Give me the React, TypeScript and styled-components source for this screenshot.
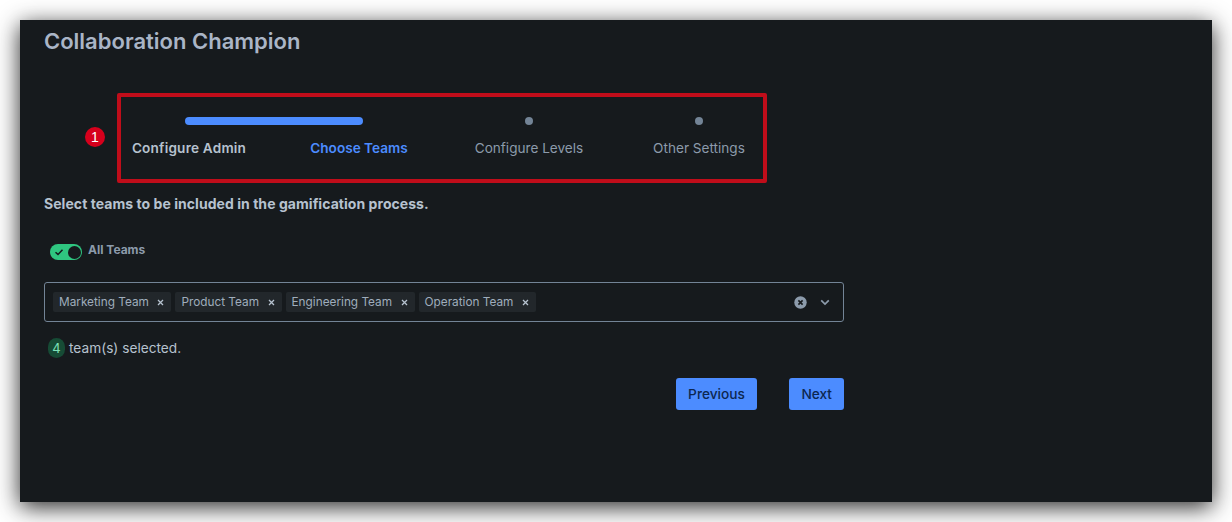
import styled, { createGlobalStyle } from 'styled-components';

const teams = ['Marketing Team', 'Product Team', 'Engineering Team', 'Operation Team'];
const steps = [
    { label: 'Configure Admin', state: 'done' },
    { label: 'Choose Teams', state: 'active' },
    { label: 'Configure Levels', state: 'todo' },
    { label: 'Other Settings', state: 'todo' },
];

export default function App() {
    return (
        <Page>
            <GlobalStyle />
            <Panel>
                <Title>Collaboration Champion</Title>
                <StepperRow>
                    <Marker>1</Marker>
                    <Highlight>
                        <Steps>
                            <ProgressBar />
                            <Dot />
                            <Dot />
                            {steps.map((step) => (
                                <StepLabel key={step.label} $state={step.state}>{step.label}</StepLabel>
                            ))}
                        </Steps>
                    </Highlight>
                </StepperRow>
                <Intro>Select teams to be included in the gamification process.</Intro>
                <ToggleRow>
                    <Toggle>
                        <svg width="10" height="10" viewBox="0 0 10 10" fill="none">
                            <path d="M1.5 5.2 L4 7.4 L8.5 2.8" stroke="#161a1d" strokeWidth="1.5" />
                        </svg>
                        <Knob />
                    </Toggle>
                    <ToggleLabel>All Teams</ToggleLabel>
                </ToggleRow>
                <MultiSelect>
                    <Tags>
                        {teams.map((team) => (
                            <Tag key={team}>
                                <TagText>{team}</TagText>
                                <svg width="7" height="7" viewBox="0 0 7 7" fill="none">
                                    <path d="M1 1 L6 6 M6 1 L1 6" stroke="#b6c2cf" strokeWidth="1.3" />
                                </svg>
                            </Tag>
                        ))}
                    </Tags>
                    <SelectIcons>
                        <svg width="13" height="13" viewBox="0 0 13 13">
                            <circle cx="6.5" cy="6.5" r="6.2" fill="#8c9bab" />
                            <path d="M4.4 4.4 L8.6 8.6 M8.6 4.4 L4.4 8.6" stroke="#161a1d" strokeWidth="1.6" />
                        </svg>
                        <svg width="10" height="7" viewBox="0 0 10 7" fill="none">
                            <path d="M1.2 1.4 L5 5 L8.8 1.4" stroke="#8c9bab" strokeWidth="1.7" />
                        </svg>
                    </SelectIcons>
                </MultiSelect>
                <Summary>
                    <Count>4</Count>
                    team(s) selected.
                </Summary>
                <Actions>
                    <Button>Previous</Button>
                    <Button>Next</Button>
                </Actions>
            </Panel>
        </Page>
    );
}

const GlobalStyle = createGlobalStyle`
    html, body {
        margin: 0;
        background: #fff;
    }
    * {
        box-sizing: border-box;
    }
`;

const Page = styled.div`
    width: 1232px;
    height: 522px;
    padding: 20px;
    overflow: hidden;
    font-family: Inter, "Liberation Sans", sans-serif;
`;

const Panel = styled.main`
    width: 1192px;
    height: 482px;
    padding: 3px 24px 0;
    background: #161a1d;
    box-shadow: 0 5px 22px rgba(0, 0, 0, 0.85);
    display: flex;
    flex-direction: column;
`;

const Title = styled.h1`
    margin: 0;
    font-size: 22px;
    line-height: 36px;
    font-weight: 600;
    color: #aab5c6;
`;

const StepperRow = styled.div`
    margin: 34px 0 0 41px;
    display: flex;
    align-items: center;
    gap: 12px;
`;

const Marker = styled.span`
    width: 20px;
    height: 20px;
    margin-bottom: 3px;
    border-radius: 50%;
    background: #d6001c;
    color: #fff;
    font-family: "Liberation Sans", sans-serif;
    font-size: 14px;
    display: flex;
    align-items: center;
    justify-content: center;
`;

const Highlight = styled.div`
    width: 650px;
    height: 90px;
    padding-top: 20px;
    border: 4px solid #c00d1a;
    border-radius: 2px;
`;

const Steps = styled.div`
    width: 680px;
    margin-left: -17px;
    display: grid;
    grid-template-columns: repeat(4, 170px);
    grid-template-rows: 8px auto;
    row-gap: 13px;
    align-items: center;
    justify-items: center;
`;

const ProgressBar = styled.div`
    grid-column: 1 / span 2;
    justify-self: stretch;
    height: 8px;
    margin: 0 81px;
    border-radius: 4px;
    background: #4c8cff;
`;

const Dot = styled.div`
    width: 8px;
    height: 8px;
    border-radius: 50%;
    background: #738496;
`;

const StepLabel = styled.div<{ $state: string }>`
    font-size: 13.6px;
    line-height: 20px;
    letter-spacing: ${(props) => (props.$state === 'done' ? '0.2px' : '0')};
    font-weight: ${(props) => (props.$state === 'todo' ? 400 : 600)};
    color: ${(props) => {
        if (props.$state === 'active') return '#4c8cff';
        if (props.$state === 'done') return '#b6c2cf';
        return '#8c9bab';
    }};
`;

const Intro = styled.p`
    margin: 11px 0 0;
    font-size: 14px;
    line-height: 20px;
    font-weight: 700;
    letter-spacing: 0.05px;
    color: #b6c2cf;
`;

const ToggleRow = styled.div`
    margin: 28px 0 0 6px;
    height: 26px;
    display: flex;
    align-items: flex-start;
    gap: 6px;
`;

const Toggle = styled.div`
    width: 32px;
    height: 16px;
    margin-top: 2px;
    padding: 0 1.5px 0 4px;
    border-radius: 8px;
    background: #2fc680;
    display: flex;
    align-items: center;
    justify-content: space-between;
`;

const Knob = styled.span`
    width: 13px;
    height: 13px;
    border-radius: 50%;
    background: #161a1d;
`;

const ToggleLabel = styled.span`
    font-size: 12px;
    line-height: 16px;
    font-weight: 700;
    color: #8c9bab;
`;

const MultiSelect = styled.div`
    width: 800px;
    height: 40px;
    margin-top: 14px;
    padding: 0 13px 0 8px;
    border: 1px solid #738496;
    border-radius: 3px;
    display: flex;
    align-items: center;
    justify-content: space-between;
`;

const Tags = styled.div`
    display: flex;
    gap: 4px;
`;

const Tag = styled.span`
    height: 20px;
    padding: 0 7px 0 6px;
    border-radius: 2px;
    background: #22272b;
    color: #9fadbc;
    display: flex;
    align-items: center;
    gap: 8.5px;
`;

const TagText = styled.span`
    font-size: 11.8px;
    margin-top: -1px;
`;

const SelectIcons = styled.div`
    display: flex;
    align-items: center;
    gap: 13px;
`;

const Summary = styled.div`
    margin: 16px 0 0 4px;
    height: 20px;
    font-size: 13.7px;
    color: #b6c2cf;
    display: flex;
    align-items: center;
    gap: 4px;
`;

const Count = styled.span`
    width: 17px;
    height: 20px;
    border-radius: 10px;
    background: #164b35;
    color: #7ee2b8;
    font-size: 13px;
    display: flex;
    align-items: center;
    justify-content: center;
`;

const Actions = styled.div`
    width: 800px;
    margin-top: 20px;
    display: flex;
    justify-content: flex-end;
    gap: 32px;
`;

const Button = styled.button`
    height: 32px;
    padding: 0 12px 1px;
    border: 0;
    border-radius: 3px;
    background: #4c8cff;
    color: #0c2750;
    font-family: inherit;
    font-size: 13.7px;
    font-weight: 500;

    &:first-child {
        padding: 0 12.5px 1px;
    }
`;
